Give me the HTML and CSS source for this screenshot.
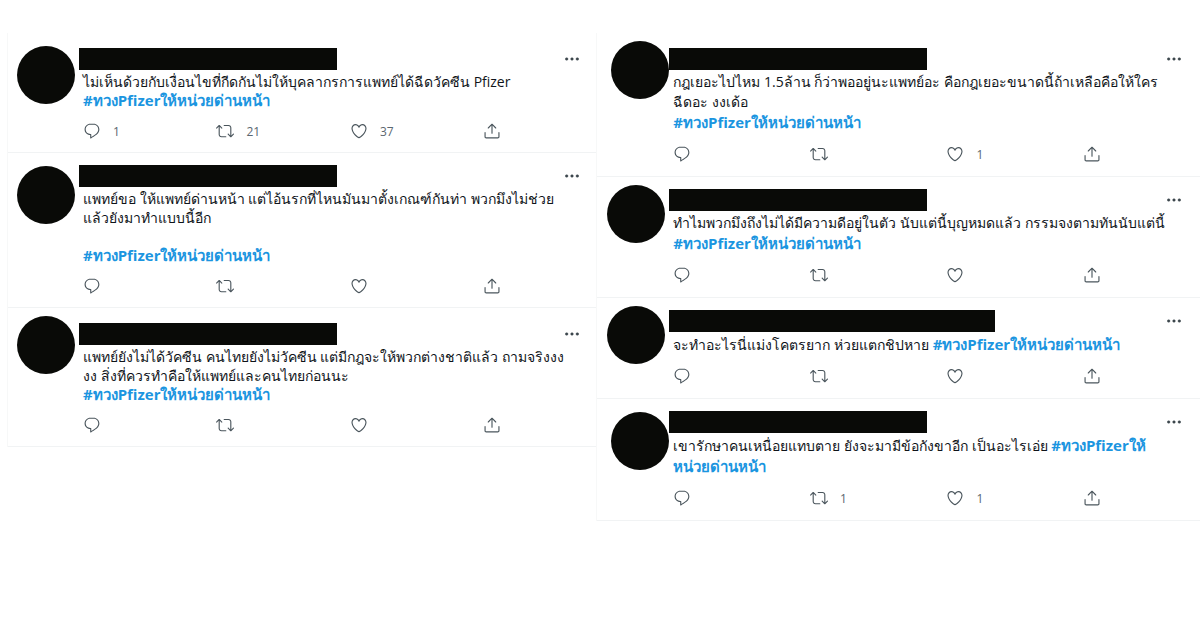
FILE: index.html
```
<!DOCTYPE html>
<html lang="th">
<head>
    <meta charset="UTF-8">
    <meta name="viewport" content="width=device-width, initial-scale=1.0">
    <title>#ทวงPfizerให้หน่วยด่านหน้า</title>
    <link rel="stylesheet" href="styles.css">
</head>
<body>
    <svg class="sprite" aria-hidden="true">
        <symbol id="reply" viewBox="0 0 24 24">
            <path d="M14.046 2.242l-4.148-.01h-.002c-4.374 0-7.8 3.427-7.8 7.802 0 4.098 3.186 7.206 7.465 7.37v3.828c0 .108.044.286.12.403.142.225.384.347.632.347.138 0 .277-.038.402-.118.264-.168 6.473-4.14 8.088-5.506 1.902-1.61 3.04-3.97 3.043-6.312v-.017c-.006-4.367-3.43-7.787-7.8-7.788zm3.787 12.972c-1.134.96-4.862 3.405-6.772 4.643V16.67c0-.414-.335-.75-.75-.75h-.396c-3.66 0-6.318-2.476-6.318-5.886 0-3.534 2.768-6.302 6.3-6.302l4.147.01h.002c3.532 0 6.3 2.766 6.302 6.296-.003 1.91-.942 3.844-2.514 5.176z"/>
        </symbol>
        <symbol id="retweet" viewBox="0 0 24 24">
            <path d="M23.77 15.67c-.292-.293-.767-.293-1.06 0l-2.22 2.22V7.65c0-2.068-1.683-3.75-3.75-3.75h-5.85c-.414 0-.75.336-.75.75s.336.75.75.75h5.85c1.24 0 2.25 1.01 2.25 2.25v10.24l-2.22-2.22c-.293-.293-.768-.293-1.06 0s-.294.768 0 1.06l3.5 3.5c.145.147.337.22.53.22s.383-.072.53-.22l3.5-3.5c.294-.292.294-.767 0-1.06zm-10.66 3.28H7.26c-1.24 0-2.25-1.01-2.25-2.25V6.46l2.22 2.22c.148.147.34.22.532.22s.384-.073.53-.22c.293-.293.293-.768 0-1.06l-3.5-3.5c-.293-.294-.768-.294-1.06 0l-3.5 3.5c-.294.292-.294.767 0 1.06s.767.293 1.06 0l2.22-2.22V16.7c0 2.068 1.683 3.75 3.75 3.75h5.85c.414 0 .75-.336.75-.75s-.337-.75-.75-.75z"/>
        </symbol>
        <symbol id="like" viewBox="0 0 24 24">
            <path d="M12 21.638h-.014C9.403 21.59 1.95 14.856 1.95 8.478c0-3.064 2.525-5.754 5.403-5.754 2.29 0 3.83 1.58 4.646 2.73.814-1.148 2.354-2.73 4.645-2.73 2.88 0 5.404 2.69 5.404 5.755 0 6.376-7.454 13.11-10.037 13.157H12zM7.354 4.225c-2.08 0-3.903 1.988-3.903 4.255 0 5.74 7.034 11.596 8.55 11.658 1.518-.062 8.55-5.917 8.55-11.658 0-2.267-1.823-4.255-3.903-4.255-2.528 0-3.94 2.936-3.952 2.965-.23.562-1.156.562-1.387 0-.014-.03-1.425-2.965-3.954-2.965z"/>
        </symbol>
        <symbol id="share" viewBox="0 0 24 24">
            <path d="M17.53 7.47l-5-5c-.293-.293-.768-.293-1.06 0l-5 5c-.294.293-.294.768 0 1.06s.767.294 1.06 0l3.72-3.72V15c0 .414.336.75.75.75s.75-.336.75-.75V4.81l3.72 3.72c.146.147.338.22.53.22s.384-.072.53-.22c.293-.293.293-.767 0-1.06z"/>
            <path d="M19.708 21.944H4.292C3.028 21.944 2 20.916 2 19.652V14c0-.414.336-.75.75-.75s.75.336.75.75v5.652c0 .437.355.792.792.792h15.416c.437 0 .792-.355.792-.792V14c0-.414.336-.75.75-.75s.75.336.75.75v5.652c0 1.264-1.028 2.292-2.292 2.292z"/>
        </symbol>
        <symbol id="more" viewBox="0 0 24 24">
            <circle cx="4" cy="12" r="2"/>
            <circle cx="12" cy="12" r="2"/>
            <circle cx="20" cy="12" r="2"/>
        </symbol>
    </svg>

    <main class="page">
        <section class="column left">
            <article class="tweet low">
                <div class="avatar"></div>
                <div class="body">
                    <div class="header">
                        <div class="name"></div>
                        <button class="more" aria-label="More"><svg><use href="#more"/></svg></button>
                    </div>
                    <p class="text">ไม่เห็นด้วยกับเงื่อนไขที่กีดกันไม่ให้บุคลากรการแพทย์ได้ฉีดวัคซีน Pfizer<br><a href="#">#ทวงPfizerให้หน่วยด่านหน้า</a></p>
                    <div class="actions">
                        <button aria-label="Reply"><svg><use href="#reply"/></svg><span>1</span></button>
                        <button aria-label="Retweet"><svg><use href="#retweet"/></svg><span>21</span></button>
                        <button aria-label="Like"><svg><use href="#like"/></svg><span>37</span></button>
                        <button aria-label="Share"><svg><use href="#share"/></svg></button>
                    </div>
                </div>
            </article>
            <article class="tweet low compact">
                <div class="avatar"></div>
                <div class="body">
                    <div class="header">
                        <div class="name"></div>
                        <button class="more" aria-label="More"><svg><use href="#more"/></svg></button>
                    </div>
                    <p class="text">แพทย์ขอ ให้แพทย์ด่านหน้า แต่ไอ้นรกที่ไหนมันมาตั้งเกณฑ์กันท่า พวกมึงไม่ช่วย<br>แล้วยังมาทำแบบนี้อีก<br><br><a href="#">#ทวงPfizerให้หน่วยด่านหน้า</a></p>
                    <div class="actions">
                        <button aria-label="Reply"><svg><use href="#reply"/></svg></button>
                        <button aria-label="Retweet"><svg><use href="#retweet"/></svg></button>
                        <button aria-label="Like"><svg><use href="#like"/></svg></button>
                        <button aria-label="Share"><svg><use href="#share"/></svg></button>
                    </div>
                </div>
            </article>
            <article class="tweet">
                <div class="avatar"></div>
                <div class="body">
                    <div class="header">
                        <div class="name"></div>
                        <button class="more" aria-label="More"><svg><use href="#more"/></svg></button>
                    </div>
                    <p class="text">แพทย์ยังไม่ได้วัคซีน คนไทยยังไม่วัคซีน แต่มีกฎจะให้พวกต่างชาติแล้ว ถามจริงงง<br>งง สิ่งที่ควรทำคือให้แพทย์และคนไทยก่อนนะ<br><a href="#">#ทวงPfizerให้หน่วยด่านหน้า</a></p>
                    <div class="actions">
                        <button aria-label="Reply"><svg><use href="#reply"/></svg></button>
                        <button aria-label="Retweet"><svg><use href="#retweet"/></svg></button>
                        <button aria-label="Like"><svg><use href="#like"/></svg></button>
                        <button aria-label="Share"><svg><use href="#share"/></svg></button>
                    </div>
                </div>
            </article>
        </section>

        <section class="column right">
            <article class="tweet near">
                <div class="avatar"></div>
                <div class="body">
                    <div class="header">
                        <div class="name"></div>
                        <button class="more" aria-label="More"><svg><use href="#more"/></svg></button>
                    </div>
                    <p class="text">กฎเยอะไปไหม 1.5ล้าน ก็ว่าพออยู่นะแพทย์อะ คือกฎเยอะขนาดนี้ถ้าเหลือคือให้ใคร<br>ฉีดอะ งงเด้อ<br><a href="#">#ทวงPfizerให้หน่วยด่านหน้า</a></p>
                    <div class="actions">
                        <button aria-label="Reply"><svg><use href="#reply"/></svg></button>
                        <button aria-label="Retweet"><svg><use href="#retweet"/></svg></button>
                        <button aria-label="Like"><svg><use href="#like"/></svg><span>1</span></button>
                        <button aria-label="Share"><svg><use href="#share"/></svg></button>
                    </div>
                </div>
            </article>
            <article class="tweet compact">
                <div class="avatar"></div>
                <div class="body">
                    <div class="header">
                        <div class="name"></div>
                        <button class="more" aria-label="More"><svg><use href="#more"/></svg></button>
                    </div>
                    <p class="text">ทำไมพวกมึงถึงไม่ได้มีความดีอยู่ในตัว นับแต่นี้บุญหมดแล้ว กรรมจงตามทันนับแต่นี้<br><a href="#">#ทวงPfizerให้หน่วยด่านหน้า</a></p>
                    <div class="actions">
                        <button aria-label="Reply"><svg><use href="#reply"/></svg></button>
                        <button aria-label="Retweet"><svg><use href="#retweet"/></svg></button>
                        <button aria-label="Like"><svg><use href="#like"/></svg></button>
                        <button aria-label="Share"><svg><use href="#share"/></svg></button>
                    </div>
                </div>
            </article>
            <article class="tweet compact">
                <div class="avatar"></div>
                <div class="body">
                    <div class="header">
                        <div class="name long"></div>
                        <button class="more" aria-label="More"><svg><use href="#more"/></svg></button>
                    </div>
                    <p class="text">จะทำอะไรนี่แม่งโคตรยาก ห่วยแตกชิปหาย <a href="#">#ทวงPfizerให้หน่วยด่านหน้า</a></p>
                    <div class="actions">
                        <button aria-label="Reply"><svg><use href="#reply"/></svg></button>
                        <button aria-label="Retweet"><svg><use href="#retweet"/></svg></button>
                        <button aria-label="Like"><svg><use href="#like"/></svg></button>
                        <button aria-label="Share"><svg><use href="#share"/></svg></button>
                    </div>
                </div>
            </article>
            <article class="tweet near low compact">
                <div class="avatar"></div>
                <div class="body">
                    <div class="header">
                        <div class="name"></div>
                        <button class="more" aria-label="More"><svg><use href="#more"/></svg></button>
                    </div>
                    <p class="text">เขารักษาคนเหนื่อยแทบตาย ยังจะมามีข้อกังขาอีก เป็นอะไรเอ่ย <a href="#">#ทวงPfizerให้<br>หน่วยด่านหน้า</a></p>
                    <div class="actions">
                        <button aria-label="Reply"><svg><use href="#reply"/></svg></button>
                        <button aria-label="Retweet"><svg><use href="#retweet"/></svg><span>1</span></button>
                        <button aria-label="Like"><svg><use href="#like"/></svg><span>1</span></button>
                        <button aria-label="Share"><svg><use href="#share"/></svg></button>
                    </div>
                </div>
            </article>
        </section>
    </main>
</body>
</html>
```
FILE: styles.css
```
body {
    margin: 0;
    background: #fff;
    color: #0f1419;
    font-family: "Open Sans", "Noto Sans", sans-serif;
    font-size: 14px;
}
.sprite {
    display: none;
}
.page {
    display: flex;
    align-items: flex-start;
    padding: 33px 0 0 7px;
}
.column {
    flex: 1;
    min-width: 0;
    border-left: 1px solid #f7f8f8;
}
.right {
    flex: 0 0 50.6%;
    box-sizing: border-box;
}
.tweet {
    display: flex;
    padding: 0 16px 11px 9px;
    border-bottom: 1px solid #f1f3f4;
}
.right .tweet {
    padding: 0 18px 12px 10px;
}
.avatar {
    flex: none;
    width: 58px;
    height: 58px;
    margin: 8px 4px 0 0;
    border-radius: 50%;
    background: #090a07;
}
.low .avatar {
    margin-top: 13px;
}
/* avatar sits right against the name */
.near .avatar {
    margin-left: 4px;
    margin-right: 0;
}
.body {
    flex: 1;
    min-width: 0;
    padding-top: 15px;
}
.compact .body {
    padding-top: 12px;
}
.header {
    display: flex;
    justify-content: space-between;
    align-items: center;
    height: 22px;
}
.name {
    width: 258px;
    height: 22px;
    background: #090a07;
}
.name.long {
    width: 326px;
}
button {
    display: flex;
    align-items: center;
    padding: 0;
    border: 0;
    background: none;
    color: #5b6770;
    font-family: inherit;
    font-size: 12px;
    cursor: pointer;
}
svg {
    width: 18px;
    height: 18px;
    fill: #4a555c;
}
.more svg {
    width: 16px;
    height: 16px;
    fill: #3c464d;
    stroke: #3c464d;
    stroke-width: 0.6;
}
.text {
    margin: 2px 0 0 4px;
    line-height: 19px;
    white-space: nowrap;
}
.right .text {
    line-height: 20px;
}
.text a {
    color: #1b95e0;
    font-size: 15px;
    font-weight: bold;
    text-decoration: none;
}
.actions {
    display: grid;
    grid-template-columns: repeat(3, 1fr) 97px;
    margin: 11px 0 0 4px;
}
.right .actions {
    grid-template-columns: repeat(3, 1fr) 99px;
}
.actions button {
    gap: 12px;
    height: 20px;
}
```
